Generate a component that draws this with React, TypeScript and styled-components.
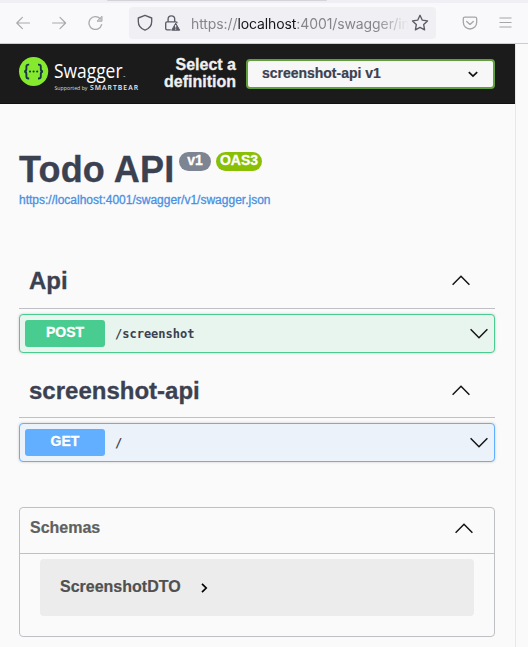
import React from "react";
import styled, { createGlobalStyle } from "styled-components";

const GlobalStyle = createGlobalStyle`
  *, *::before, *::after { box-sizing: border-box; }
  html, body { margin: 0; background: #fafafa; overflow: hidden; }
  body { font-family: "Liberation Sans", Arial, sans-serif; color: #3b4151; }
  h1, h2, p { margin: 0; }
  svg { display: block; flex: none; }
`;

const Window = styled.div`
  width: 528px;
  height: 647px;
  display: flex;
  flex-direction: column;
  overflow: hidden;
`;

const TabStrip = styled.div`
  height: 3px;
  flex: none;
  padding-left: 107px;
  background: #f0f0f4;
`;

const ActiveTab = styled.div`
  width: 220px;
  height: 1px;
  background: #d4d4d8;
  border-radius: 0 0 3px 3px;
`;

const BrowserBar = styled.header`
  height: 41px;
  flex: none;
  display: flex;
  align-items: center;
  padding: 0 15px 0 16px;
  background: #f9f9fb;
  border-bottom: 1px solid #cccccd;
`;

const NavButtons = styled.div`
  display: flex;
  gap: 20px;
  width: 113px;
`;

const AddressBar = styled.div`
  width: 307px;
  height: 32px;
  display: flex;
  align-items: center;
  padding: 0 7px 0 8px;
  border-radius: 4px;
  background: #f0f0f4;
`;

const SecurityIcons = styled.div`
  display: flex;
  gap: 11px;
  width: 54px;
`;

const Url = styled.div`
  width: 220px;
  flex: none;
  overflow: hidden;
  white-space: nowrap;
  font-family: Inter, sans-serif;
  font-size: 14px;
  line-height: 18px;
  letter-spacing: -0.1px;
  padding-top: 1px;
  color: #85858b;
  mask-image: linear-gradient(to right, #000 185px, transparent 218px);
`;

const Host = styled.span`
  color: #15141a;
`;

const BrowserActions = styled.div`
  display: flex;
  align-items: center;
  gap: 21px;
  margin-left: 26px;
`;

const Viewport = styled.div`
  flex: 1;
  min-height: 0;
  display: flex;
`;

const Page = styled.main`
  width: 515px;
  flex: none;
`;

const Scrollbar = styled.div`
  flex: 1;
  border-left: 1px solid #e8e8e8;
  background: #fafafa;
`;

const Topbar = styled.div`
  height: 60px;
  display: flex;
  align-items: center;
  padding: 0 20px 0 19px;
  background: #1b1b1b;
  border-bottom: 1px solid #110f11;
`;

const DefinitionLabel = styled.div`
  width: 97px;
  margin-top: -1px;
  text-align: right;
  font-size: 16px;
  font-weight: 700;
  line-height: 17px;
  color: #f0f0f0;
  -webkit-text-stroke: 0.3px #f0f0f0;
`;

const DefinitionSelect = styled.div`
  width: 249px;
  height: 30px;
  flex: none;
  margin: 1px 0 0 10px;
  display: flex;
  align-items: center;
  justify-content: space-between;
  padding: 0 15px 0 14px;
  border: 2px solid #62a03f;
  border-radius: 4px;
  background: #f7f7f7;
  font-size: 14px;
  font-weight: 700;
  line-height: 16px;
`;

const SelectedName = styled.span`
  margin-top: -2px;
  letter-spacing: -0.02px;
  -webkit-text-stroke: 0.2px #3b4151;
`;

const Content = styled.div`
  padding: 47px 20px 0 19px;
`;

const Info = styled.section`
  height: 103px;
`;

const TitleRow = styled.div`
  display: flex;
  align-items: flex-start;
`;

const Title = styled.h1`
  width: 160px;
  height: 36px;
  padding-top: 1px;
  white-space: nowrap;
  font-size: 36px;
  line-height: 36px;
  letter-spacing: 0.18px;
  -webkit-text-stroke: 0.3px #3b4151;
`;

const VersionBadge = styled.span<{ $color: string; $width: number }>`
  width: ${(p) => p.$width}px;
  height: 19px;
  margin: 1px 5px 0 0;
  border-radius: 10px;
  background: ${(p) => p.$color};
  color: #fff;
  font-size: 14px;
  font-weight: 700;
  line-height: 16px;
  text-align: center;
  -webkit-text-stroke: 0.3px #fff;
`;

const SpecLink = styled.a`
  display: block;
  margin-top: 6px;
  color: #4990e2;
  font-size: 12px;
  line-height: 14px;
  -webkit-text-stroke: 0.3px #4990e2;
`;

const TagSection = styled.section`
  height: 109px;
`;

const TagHeader = styled.div<{ $offset?: number }>`
  height: 55px;
  display: flex;
  align-items: center;
  justify-content: space-between;
  padding: ${(p) => p.$offset ?? 0}px 25px 0 10px;
  border-bottom: 1px solid #bfc0c4;
`;

const TagName = styled.h2`
  font-size: 24px;
  line-height: 28px;
  -webkit-text-stroke: 0.3px #3b4151;
`;

const Operation = styled.div<{ $color: string; $background: string }>`
  height: 39px;
  margin-top: 5px;
  display: flex;
  align-items: center;
  padding: 0 6px 0 5px;
  border: 1px solid ${(p) => p.$color};
  border-radius: 4px;
  background: ${(p) => p.$background};
  box-shadow: 0 0 3px rgba(0, 0, 0, 0.19);
`;

const Method = styled.span<{ $color: string }>`
  width: 80px;
  height: 27px;
  border-radius: 3px;
  background: ${(p) => p.$color};
  color: #fff;
  font-size: 14px;
  font-weight: 700;
  line-height: 24px;
  text-align: center;
  text-shadow: 0 1px 0 rgba(0, 0, 0, 0.1);
  -webkit-text-stroke: 0.3px #fff;
`;

const Path = styled.span`
  flex: 1;
  padding-left: 10px;
  font-family: "DejaVu Sans Mono", monospace;
  font-size: 12px;
  font-weight: 700;
  line-height: 16px;
`;

const Schemas = styled.section`
  height: 130px;
  margin-top: 35px;
  border: 1px solid #bfc0c4;
  border-radius: 4px;
`;

const SchemasHeader = styled.div`
  height: 46px;
  display: flex;
  align-items: center;
  justify-content: space-between;
  padding: 0 21px 3px 10px;
  border-bottom: 1px solid #bfc0c4;
`;

const SchemasTitle = styled.span`
  padding-bottom: 2px;
  color: #606060;
  font-size: 16px;
  font-weight: 700;
  line-height: 20px;
  -webkit-text-stroke: 0.2px #606060;
`;

const Model = styled.div`
  height: 57px;
  margin: 5px 20px 0;
  display: flex;
  align-items: center;
  gap: 20px;
  padding: 0 20px 2px;
  border-radius: 4px;
  background: #ececec;
  color: #505050;
  font-size: 16px;
  font-weight: 700;
  -webkit-text-stroke: 0.2px #505050;
`;

const ModelArrow = styled.span`
  margin-top: 3px;
`;

const Arrow = ({ up = false }: { up?: boolean }) => (
  <svg width="18" height="12" viewBox="0 0 18 12" fill="none" stroke="#111" strokeWidth="1.45">
    <path d={up ? "M.6 9.7 9 1.3l8.4 8.4" : "M.6 1.3 9 9.7l8.4-8.4"} />
  </svg>
);

const SwaggerLogo = () => (
  <svg width="120" height="41" viewBox="0 0 120 41" aria-label="Swagger">
    <circle cx="14.6" cy="18.5" r="14.6" fill="#85ea2d" />
    <g fill="none" stroke="#173647" strokeWidth="1.9">
      <path d="M10.2 11.6H9.4q-2 0-2 2v2.5q0 2.3-2.2 2.4 2.2.1 2.2 2.4v2.6q0 2 2 2h.8" />
      <path d="M19 11.6h.8q2 0 2 2v2.5q0 2.3 2.2 2.4-2.2.1-2.2 2.4v2.6q0 2-2 2H19" />
    </g>
    <g fill="#173647">
      <circle cx="11" cy="18.5" r="1.05" />
      <circle cx="14.6" cy="18.5" r="1.05" />
      <circle cx="18.2" cy="18.5" r="1.05" />
    </g>
    <g fill="#fff" fontFamily="Open Sans, sans-serif">
      <text x="35" y="25" fontSize="20" textLength="68.5" lengthAdjust="spacingAndGlyphs">Swagger</text>
      <text x="104" y="25" fontSize="3">™</text>
      <text x="35.5" y="36.5" fontSize="5.6" textLength="33" lengthAdjust="spacingAndGlyphs" fill="#ddd">Supported by</text>
      <text x="71" y="36.5" fontSize="6.8" fontWeight="600" textLength="48" fill="#eee">SMARTBEAR</text>
    </g>
  </svg>
);

export default function App() {
  return (
    <Window>
      <GlobalStyle />
      <TabStrip><ActiveTab /></TabStrip>
      <BrowserBar>
        <NavButtons>
          <svg width="16" height="16" viewBox="0 0 16 16" fill="none" stroke="#a9a9ae" strokeWidth="1.2" strokeLinecap="round" strokeLinejoin="round">
            <path d="M13.5 8H.8M6.4 2.4.8 8l5.6 5.6" />
          </svg>
          <svg width="16" height="16" viewBox="0 0 16 16" fill="none" stroke="#a9a9ae" strokeWidth="1.2" strokeLinecap="round" strokeLinejoin="round">
            <path d="M.6 8h12.9M8 2.4 13.6 8 8 13.6" />
          </svg>
          <svg width="16" height="16" viewBox="0 0 16 16" fill="none" stroke="#a9a9ae" strokeWidth="1.3" strokeLinecap="round" strokeLinejoin="round">
            <path d="M12.2 3.8A6.4 6.4 0 1 0 13.6 9.6" />
            <path d="M14 1.6v4.6H9.4z" fill="#a9a9ae" fillOpacity="0.5" strokeWidth="1" />
          </svg>
        </NavButtons>
        <AddressBar>
          <SecurityIcons>
            <svg width="16" height="18" viewBox="0 0 16 18" fill="none" stroke="#5b5b66" strokeWidth="1.35" strokeLinejoin="round">
              <path d="M8 1.3 14.7 4v3.5c0 4.3-2.7 7.2-6.7 8.7-4-1.5-6.7-4.4-6.7-8.7V4z" />
            </svg>
            <svg width="17" height="18" viewBox="0 0 17 18">
              <path d="M4.1 8V5.1a3.3 3.3 0 0 1 6.6 0V8M6.8 15.8H3.1q-1.4 0-1.4-1.4V9.2q0-1.4 1.4-1.4h8.6q1.4 0 1.4 1.4" fill="none" stroke="#5b5b66" strokeWidth="1.35" />
              <path d="m11.7 9.2 4 7H7.7z" fill="#5b5b66" stroke="#5b5b66" strokeLinejoin="round" />
              <path d="M11.7 11v2.6m0 1v1" stroke="#fff" strokeWidth="1" />
            </svg>
          </SecurityIcons>
          <Url>https://<Host>localhost</Host>:4001/swagger/in</Url>
          <svg width="18" height="18" viewBox="0 0 18 18" fill="none" stroke="#5b5b66" strokeWidth="1.35" strokeLinejoin="round">
            <path d="m9 1.3 2.3 4.9 5.2.7-3.8 3.7.9 5.3L9 13.4l-4.6 2.5.9-5.3-3.8-3.7 5.2-.7z" />
          </svg>
        </AddressBar>
        <BrowserActions>
          <svg width="16" height="16" viewBox="0 0 16 16" fill="none" stroke="#a5a5aa" strokeWidth="1.3" strokeLinecap="round" strokeLinejoin="round">
            <path d="M3 2.1h10q1.7 0 1.7 1.7v3.5a6.7 6.7 0 0 1-13.4 0V3.8Q1.3 2.1 3 2.1z" />
            <path d="m4.7 6.4 3.3 3 3.3-3" />
          </svg>
          <svg width="13" height="14" viewBox="0 0 13 14" stroke="#a5a5aa" strokeWidth="1.2">
            <path d="M.5 2h12M.5 6.5h12M.5 11h12" />
          </svg>
        </BrowserActions>
      </BrowserBar>
      <Viewport>
        <Page>
          <Topbar>
            <SwaggerLogo />
            <DefinitionLabel>Select a<br />definition</DefinitionLabel>
            <DefinitionSelect>
              <SelectedName>screenshot-api v1</SelectedName>
              <svg width="10" height="7" viewBox="0 0 10 7" fill="none" stroke="#111" strokeWidth="1.7">
                <path d="m.8 1.2 4.2 4 4.2-4" />
              </svg>
            </DefinitionSelect>
          </Topbar>
          <Content>
            <Info>
              <TitleRow>
                <Title>Todo API</Title>
                <VersionBadge $color="#7d8492" $width={32}>v1</VersionBadge>
                <VersionBadge $color="#89bf04" $width={46}>OAS3</VersionBadge>
              </TitleRow>
              <SpecLink>https://localhost:4001/swagger/v1/swagger.json</SpecLink>
            </Info>
            <TagSection>
              <TagHeader><TagName>Api</TagName><Arrow up /></TagHeader>
              <Operation $color="#49cc90" $background="#e8f4ee">
                <Method $color="#49cc90">POST</Method>
                <Path>/screenshot</Path>
                <Arrow />
              </Operation>
            </TagSection>
            <TagSection>
              <TagHeader $offset={2}><TagName>screenshot-api</TagName><Arrow up /></TagHeader>
              <Operation $color="#61affe" $background="#ebf2f9">
                <Method $color="#61affe">GET</Method>
                <Path>/</Path>
                <Arrow />
              </Operation>
            </TagSection>
            <Schemas>
              <SchemasHeader><SchemasTitle>Schemas</SchemasTitle><Arrow up /></SchemasHeader>
              <Model>
                ScreenshotDTO
                <ModelArrow>
                  <svg width="7" height="10" viewBox="0 0 7 10" fill="none" stroke="#000" strokeWidth="1.7">
                    <path d="m1 .8 4.2 4.2L1 9.2" />
                  </svg>
                </ModelArrow>
              </Model>
            </Schemas>
          </Content>
        </Page>
        <Scrollbar />
      </Viewport>
    </Window>
  );
}
